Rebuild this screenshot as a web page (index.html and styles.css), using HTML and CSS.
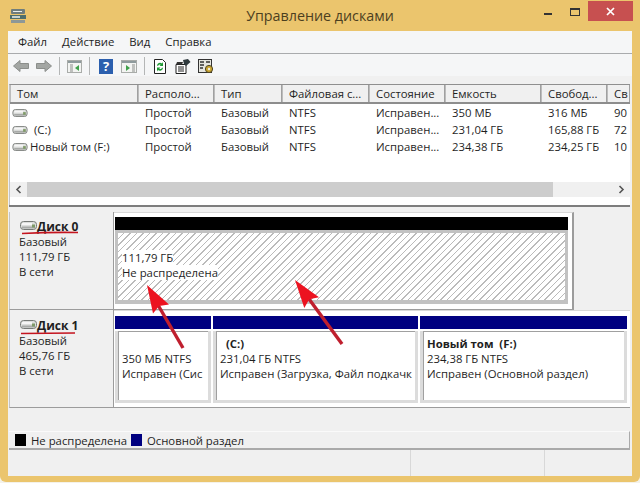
FILE: index.html
```html
<!DOCTYPE html>
<html lang="ru">
<head>
    <meta charset="UTF-8">
    <meta name="viewport" content="width=device-width, initial-scale=1.0">
    <title>Управление дисками</title>
    <link rel="stylesheet" href="styles.css">
</head>
<body>
    <svg class="defs">
        <symbol id="disk" viewBox="0 0 17 9">
            <rect x="0.5" y="0.5" width="16" height="8" rx="3" fill="#dcdedc" stroke="#777a77"/>
            <rect x="2" y="2" width="10" height="2" fill="#f6f6f6"/>
            <rect x="2" y="5.5" width="13" height="2" fill="#a8aaa8"/>
            <rect x="12" y="3.5" width="3" height="3" fill="#7f9a68"/>
        </symbol>
    </svg>

    <div class="window">
        <div class="titlebar">
            <svg class="app-icon" viewBox="0 0 16 16" width="16" height="16">
                <rect x="1" y="1" width="14" height="5" rx="1" fill="#6f7d7c"/>
                <rect x="3" y="3" width="9" height="1" fill="#e9eeee"/>
                <rect x="0" y="7" width="16" height="4" fill="#4f6f6c"/>
                <rect x="2" y="8" width="8" height="2" fill="#c7d2d0"/>
                <rect x="1" y="12" width="14" height="3" fill="#8d9897"/>
            </svg>
            <div class="title">Управление дисками</div>
            <div class="caption-min"></div>
            <div class="caption-max"></div>
            <div class="caption-close">
                <svg viewBox="0 0 9 9" width="9" height="9"><path d="M1 1L8 8M8 1L1 8" stroke="#fff" stroke-width="1.7"/></svg>
            </div>
        </div>

        <div class="client">
            <div class="menu">
                <span>Файл</span>
                <span>Действие</span>
                <span>Вид</span>
                <span>Справка</span>
            </div>

            <div class="toolbar">
                <svg viewBox="0 0 16 12" width="16" height="12"><path d="M0.5 6L7 0.5V3.5H15.5V8.5H7V11.5Z" fill="#a3a6a3" stroke="#8b8e8b"/></svg>
                <svg viewBox="0 0 16 12" width="16" height="12"><path d="M15.5 6L9 0.5V3.5H0.5V8.5H9V11.5Z" fill="#a3a6a3" stroke="#8b8e8b"/></svg>
                <div class="tool-sep"></div>
                <svg viewBox="0 0 15 13" width="15" height="13">
                    <rect x="0.5" y="0.5" width="14" height="12" fill="#f3f4f2" stroke="#a9aca9"/>
                    <rect x="1" y="1" width="13" height="2" fill="#8e9a9c"/>
                    <path d="M3 5H6M3 7H6M3 9H6M3 11H6" stroke="#8a8d8a"/>
                    <path d="M12 5V11L8 8Z" fill="#3fa04a"/>
                </svg>
                <div class="tool-sep"></div>
                <span class="help">?</span>
                <svg viewBox="0 0 16 13" width="16" height="13">
                    <rect x="0.5" y="0.5" width="15" height="12" fill="#f3f4f2" stroke="#a9aca9"/>
                    <rect x="1" y="1" width="14" height="2" fill="#8e9a9c"/>
                    <path d="M11 5H14M11 7H14M11 9H14M11 11H14" stroke="#8a8d8a"/>
                    <path d="M5 5V11L9 8Z" fill="#3fa04a"/>
                </svg>
                <div class="tool-sep"></div>
                <svg class="tool-refresh" viewBox="0 0 15 15" width="15" height="15">
                    <path d="M1.5 0.5H9.5L12.5 3.5V14.5H1.5Z" fill="#fff" stroke="#222"/>
                    <path d="M4 6.5A3 3 0 0 1 9 4.5L10 3V7H6.5L7.8 5.8A2 2 0 0 0 5 7Z" fill="#1f9a35"/>
                    <path d="M10 9A3 3 0 0 1 5 11L4 12.5V8.5H7.5L6.2 9.7A2 2 0 0 0 9 8.5Z" fill="#1f9a35"/>
                </svg>
                <svg viewBox="0 0 16 15" width="16" height="15">
                    <path d="M1 5.5H11V14.5H1Z" fill="#fff" stroke="#1c1c1c"/>
                    <path d="M2 3H8L7 5.5H1Z" fill="#333"/>
                    <path d="M3 8H9M3 10H9M3 12H9" stroke="#222"/>
                    <path d="M8 1L13 0L15.5 3L11 7L9 5Z" fill="#2f3a3e"/>
                </svg>
                <svg viewBox="0 0 16 15" width="16" height="15">
                    <rect x="0.5" y="0.5" width="13" height="13" fill="#e6e6df" stroke="#333"/>
                    <path d="M2 3H6M8 3H12M2 6H6M2 9H5" stroke="#333" stroke-width="1.4"/>
                    <circle cx="11" cy="10" r="3.6" fill="#c9a531" stroke="#4e4420"/>
                    <circle cx="11" cy="10" r="1.2" fill="#f2efe0"/>
                </svg>
            </div>

            <div class="list">
                <div class="list-row list-head">
                    <div>Том</div>
                    <div>Располо...</div>
                    <div>Тип</div>
                    <div>Файловая с...</div>
                    <div>Состояние</div>
                    <div>Емкость</div>
                    <div>Свобод...</div>
                    <div>Св</div>
                </div>
                <div class="list-body">
                    <div class="list-row">
                        <div class="vol"><svg class="vol-icon"><use href="#disk"/></svg></div>
                        <div>Простой</div>
                        <div>Базовый</div>
                        <div>NTFS</div>
                        <div>Исправен...</div>
                        <div>350 МБ</div>
                        <div>316 МБ</div>
                        <div>90</div>
                    </div>
                    <div class="list-row">
                        <div class="vol"><svg class="vol-icon"><use href="#disk"/></svg><span class="vol-name">(C:)</span></div>
                        <div>Простой</div>
                        <div>Базовый</div>
                        <div>NTFS</div>
                        <div>Исправен...</div>
                        <div>231,04 ГБ</div>
                        <div>165,88 ГБ</div>
                        <div>72</div>
                    </div>
                    <div class="list-row">
                        <div class="vol"><svg class="vol-icon"><use href="#disk"/></svg>Новый том (F:)</div>
                        <div>Простой</div>
                        <div>Базовый</div>
                        <div>NTFS</div>
                        <div>Исправен...</div>
                        <div>234,38 ГБ</div>
                        <div>234,25 ГБ</div>
                        <div>10</div>
                    </div>
                </div>
                <div class="hscroll">
                    <svg viewBox="0 0 7 9" width="7" height="9"><path d="M5.5 1L2 4.5L5.5 8" fill="none" stroke="#555" stroke-width="1.6"/></svg>
                    <div class="hscroll-track"><div class="hscroll-thumb"></div></div>
                    <svg viewBox="0 0 7 9" width="7" height="9"><path d="M1.5 1L5 4.5L1.5 8" fill="none" stroke="#555" stroke-width="1.6"/></svg>
                </div>
            </div>

            <div class="disks">
                <div class="disk-row">
                    <div class="disk-label">
                        <div class="disk-name"><svg class="disk-icon"><use href="#disk"/></svg>Диск 0</div>
                        <div>Базовый</div>
                        <div>111,79 ГБ</div>
                        <div>В сети</div>
                    </div>
                    <div class="disk-panel disk-panel-short">
                        <div class="part">
                            <div class="part-bar bar-black"></div>
                            <div class="part-body part-free">
                                <span>111,79 ГБ</span>
                                <span>Не распределена</span>
                            </div>
                        </div>
                    </div>
                </div>
                <div class="disk-row disk-row-second">
                    <div class="disk-label">
                        <div class="disk-name"><svg class="disk-icon"><use href="#disk"/></svg>Диск 1</div>
                        <div>Базовый</div>
                        <div>465,76 ГБ</div>
                        <div>В сети</div>
                    </div>
                    <div class="disk-panel">
                        <div class="part part-sys">
                            <div class="part-bar bar-blue"></div>
                            <div class="part-body">
                                <div class="part-name"></div>
                                <div>350 МБ NTFS</div>
                                <div>Исправен (Сис</div>
                            </div>
                        </div>
                        <div class="part part-c">
                            <div class="part-bar bar-blue"></div>
                            <div class="part-body">
                                <div class="part-name part-name-c">(C:)</div>
                                <div>231,04 ГБ NTFS</div>
                                <div>Исправен (Загрузка, Файл подкачк</div>
                            </div>
                        </div>
                        <div class="part part-f">
                            <div class="part-bar bar-blue"></div>
                            <div class="part-body">
                                <div class="part-name">Новый том&nbsp; (F:)</div>
                                <div>234,38 ГБ NTFS</div>
                                <div>Исправен (Основной раздел)</div>
                            </div>
                        </div>
                    </div>
                </div>
            </div>

            <div class="legend">
                <span class="swatch bar-black"></span>
                <span class="legend-text legend-first">Не распределена</span>
                <span class="swatch bar-blue"></span>
                <span class="legend-text">Основной раздел</span>
            </div>

            <div class="statusbar">
                <div class="status-main"></div>
                <div class="status-mid"></div>
                <div></div>
            </div>
        </div>
    </div>

    <!-- red marks drawn over the screenshot -->
    <svg class="marks" viewBox="0 0 640 483" width="640" height="483">
        <path d="M22 233.5Q50 232 78 232.5" fill="none" stroke="#c4141f" stroke-width="1.6"/>
        <path d="M21 333.5Q48 333 75 333" fill="none" stroke="#c4141f" stroke-width="1.6"/>
        <line x1="158" y1="305" x2="183" y2="348" stroke="#bf1f2e" stroke-width="3.4"/>
        <polygon points="147,285 169,304.5 159,306 153,313.5" fill="#ec1320"/>
        <line x1="309" y1="299" x2="342" y2="344" stroke="#bf1f2e" stroke-width="3.4"/>
        <polygon points="295,280 319,297.3 309.2,299.3 304.3,307.9" fill="#ec1320"/>
    </svg>
</body>
</html>
```

FILE: styles.css
```css
html, body { margin: 0; padding: 0; }
body { width: 640px; height: 483px; overflow: hidden; background: #f4f2ea; position: relative; font-family: "Open Sans", "Noto Sans", sans-serif; font-size: 11.35px; color: #1f1f1f; }
.defs { display: none; }

.window { width: 640px; height: 482px; background: #ebc56d; border-radius: 0 0 6px 6px; padding: 0 8px 6px 8px; box-sizing: border-box; display: flex; flex-direction: column; }

.titlebar { height: 31px; flex: none; display: flex; align-items: flex-start; position: relative; }
.app-icon { margin: 8px 0 0 2px; }
.title { position: absolute; left: -8px; width: 640px; top: 6px; text-align: center; font-size: 14.3px; line-height: 20px; color: #4c3f1f; }
.caption-min { position: absolute; left: 536px; top: 13px; width: 8px; height: 2px; background: #333; }
.caption-max { position: absolute; left: 562px; top: 8px; width: 8px; height: 5px; border: 1px solid #333; border-top-width: 2px; }
.caption-close { position: absolute; left: 580px; top: 1px; width: 45px; height: 20px; background: #c75050; display: flex; align-items: center; justify-content: center; }

.client { flex: 1; display: flex; flex-direction: column; background: #f0f0f0; }

.menu { height: 22px; flex: none; display: flex; align-items: center; background: #f5f6f7; border-bottom: 1px solid #a9abad; padding-left: 10px; gap: 15px; }
.menu span { line-height: 22px; }

.toolbar { height: 22px; flex: none; box-sizing: border-box; padding: 2px 0 0 5px; display: flex; align-items: center; gap: 7px; background: #f5f6f7; }
.tool-sep { width: 1px; height: 18px; background: #b4b6b6; }
.help { width: 14px; height: 15px; margin: 0 1px 0 2px; background: #2b5fae; color: #fff; font-weight: 700; font-size: 13px; line-height: 15px; text-align: center; }
.tool-refresh { margin-left: 1px; }

.list { margin: 8px 2px 0 1px; height: 121px; flex: none; box-sizing: border-box; display: flex; flex-direction: column; background: #fff; border-top: 1px solid #8f8f8f; border-left: 1px solid #c4c4c4; }
.list-row { display: grid; grid-template-columns: 128px 76px 68px 87px 76px 96px 66px 23px; height: 17px; line-height: 17px; }
.list-row > div { padding-left: 7px; white-space: nowrap; overflow: hidden; }
.list-head { height: 19px; box-sizing: border-box; line-height: 18px; background: #f0f0f0; border-bottom: 2px solid #8d8d8d; flex: none; }
.list-head > div { box-sizing: border-box; border-right: 1px solid #a0a0a0; border-left: 1px solid #bcbcbc; padding-left: 6px; }
.list-body { flex: 1; }
.list-row > .vol { padding-left: 2px; display: flex; align-items: center; }
.vol-icon { width: 16px; height: 8px; margin-right: 2px; flex: none; }
.vol-name { margin-left: 4px; }
.hscroll { height: 15px; flex: none; margin-bottom: 8px; display: flex; align-items: center; background: #f0f0f0; padding: 0 5px; }
.hscroll-track { flex: 1; margin: 0 6px 0 5px; height: 15px; }
.hscroll-thumb { width: 526px; height: 15px; background: #cdcdcd; }

.disks { height: 203px; flex: none; box-sizing: border-box; border-top: 2px solid #7d7d7d; margin: 0 2px 0 1px; padding-top: 5px; display: flex; flex-direction: column; }
.disk-row { height: 98px; flex: none; display: flex; }
.disk-label { width: 105px; flex: none; box-sizing: border-box; padding: 7px 0 0 9px; line-height: 15px; background: #f0f0f0; border-right: 1px solid #9c9c9c; border-bottom: 1px solid #9c9c9c; border-left: 1px solid #c4c4c4; }
.disk-row-second .disk-label { padding-top: 8px; }
.disk-name { font-weight: 700; font-size: 12px; display: flex; align-items: center; margin-left: 1px; }
.disk-icon { width: 17px; height: 9px; margin-bottom: 2px; flex: none; }
.disk-panel { flex: 1; box-sizing: border-box; background: #fff; padding: 5px 3px 0 1px; display: flex; gap: 2px; border-bottom: 1px solid #9c9c9c; border-top: 1px solid #d8d8d8; }
.disk-panel-short { flex: none; width: 460px; padding: 4px 4px 0 1px; border-right: 2px solid #9c9c9c; }

.part { display: flex; flex-direction: column; min-width: 0; }
.disk-panel-short .part { flex: 1; }
.part-sys { width: 96px; }
.part-c { width: 205px; }
.part-f { width: 207px; }
.part-bar { height: 13px; flex: none; }
.bar-black { background: #000; }
.bar-blue { background: #000080; }
.part-body { height: 72px; box-sizing: border-box; margin-top: 2px; line-height: 15px; padding: 5px 0 0 4px; background: #fff; border: 3px solid #dcdcdc; border-top: 0; box-shadow: inset 1px 1px 0 #a0a0a0; white-space: nowrap; overflow: hidden; }
.part-name { height: 15px; font-weight: 700; }
.part-name-c { padding-left: 6px; }
.part-free { height: 74px; margin-top: 0; padding: 17px 0 0 4px; display: flex; flex-direction: column; align-items: flex-start; border: 3px solid #c2c2c2; border-bottom-width: 4px; box-shadow: none; background: repeating-linear-gradient(135deg, #fff 0, #fff 3.6px, #bbb 3.6px, #bbb 4.6px); }
.part-free span { background: #fff; }

.legend { margin: 23px 2px 0 1px; height: 19px; flex: none; box-sizing: border-box; display: flex; align-items: center; padding-left: 6px; background: #f0f0f0; border-top: 1px solid #fafafa; border-right: 1px solid #aaa; border-bottom: 2px solid #aaa; }
.swatch { width: 11px; height: 12px; flex: none; margin-right: 5px; }
.legend-first { margin-right: 4px; }

.statusbar { flex: 1; display: grid; grid-template-columns: 403px 134px 1fr; background: #f0f0f0; }
.status-main, .status-mid { border-right: 1px solid #d8d8d8; }

.marks { position: absolute; left: 0; top: 0; pointer-events: none; }
```
